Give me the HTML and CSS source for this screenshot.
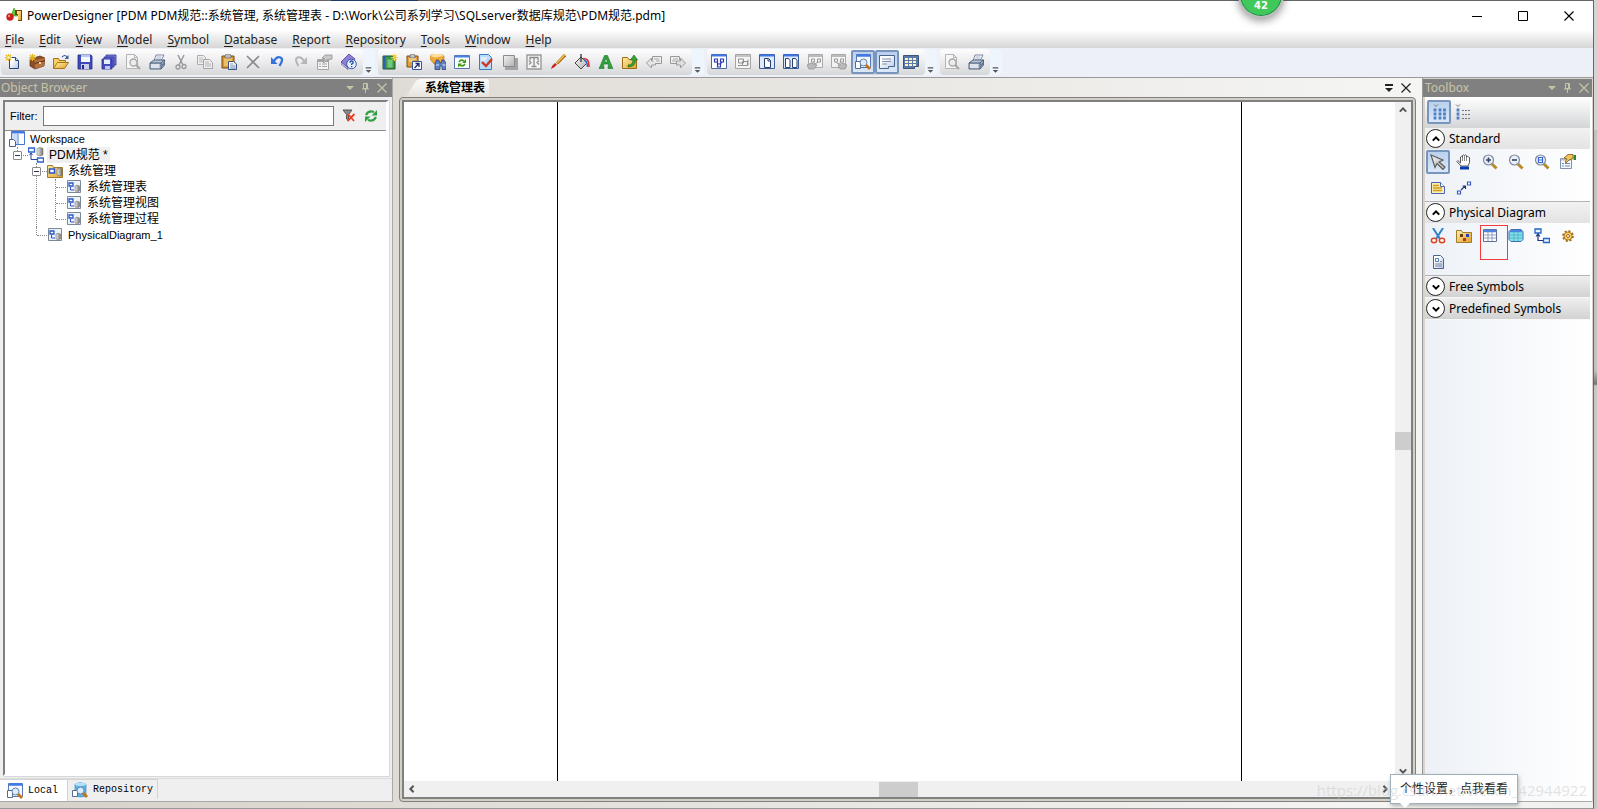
FILE: index.html
```html
<!DOCTYPE html>
<html lang="zh-CN">
<head>
<meta charset="utf-8">
<title>PowerDesigner</title>
<link rel="stylesheet" href="styles.css">
</head>
<body>
<svg class="sprite" width="0" height="0" aria-hidden="true">
  <defs>
    <linearGradient id="gold" x1="0" y1="0" x2="1" y2="1"><stop offset="0" stop-color="#fff0a8"/><stop offset="1" stop-color="#e0a02c"/></linearGradient>
    <linearGradient id="page" x1="0" y1="0" x2="1" y2="1"><stop offset="0.3" stop-color="#fff"/><stop offset="1" stop-color="#b4c6e2"/></linearGradient>
    <linearGradient id="gray" x1="0" y1="0" x2="1" y2="1"><stop offset="0" stop-color="#f4f4f4"/><stop offset="1" stop-color="#b0b0b0"/></linearGradient>
    <linearGradient id="drum" x1="0" y1="0" x2="1" y2="0"><stop offset="0" stop-color="#eee"/><stop offset="1" stop-color="#777"/></linearGradient>
  </defs>
  <symbol id="i-app" viewBox="0 0 16 16"><path d="M8 0l4 8H5z" fill="#5fc436" stroke="#3c8f22" stroke-width=".6"/><circle cx="4" cy="9" r="3.7" fill="#c9201c"/><circle cx="3" cy="8" r="1.2" fill="#f08a80"/><path d="M9 2h7v11h-4V7H9z" fill="#7c4300"/><path d="M11 3h4v9h-3V6h-1z" fill="url(#gold)"/></symbol>
  <symbol id="i-new" viewBox="0 0 16 16"><path d="M4.500 3.500h6l3 3v8h-9z" fill="url(#page)" stroke="#29477c"/><path d="M10.500 3.500v3h3" fill="#dce6f6" stroke="#29477c"/><path d="M3.500 0v7M0 3.500h7M1 1l5 5M6 1L1 6" stroke="#e5b51c" stroke-width="1.200"/><circle cx="3.500" cy="3.500" r="1.300" fill="#fff9b8"/></symbol>
  <symbol id="i-case" viewBox="0 0 16 16"><path d="M1 5l10-3 5 2-1 8-9 3-5-3z" fill="#8d4f27" stroke="#5b2e12" stroke-width=".7"/><path d="M6 6v9l9-3 1-8z" fill="#b5713e"/><path d="M6 9.500l10-3" stroke="#5b2e12"/><path d="M10 8h2v2h-2z" fill="#f0d9a0"/><path d="M3.500 0v7M0 3.500h7M1 1l5 5M6 1L1 6" stroke="#e5b51c" stroke-width="1.200"/></symbol>
  <symbol id="i-open" viewBox="0 0 16 16"><path d="M.5 14.500V4.500h5l1 2h6v3" fill="#f6cf66" stroke="#a87416"/><path d="M.5 14.500l4-6h11l-4 6z" fill="url(#gold)" stroke="#a87416"/><path d="M9 3q3-3 5 0" fill="none" stroke="#3c5c9c" stroke-width="1.200"/><path d="M15.500 1v4h-4z" fill="#3c5c9c"/></symbol>
  <symbol id="i-save" viewBox="0 0 16 16"><path d="M1 1h13l1 1v13H1z" fill="#3f48bd" stroke="#252b80" stroke-width=".8"/><path d="M4 1h9v7H4z" fill="#f3f7ff"/><path d="M4 1h9v2H4z" fill="#b6c8f5"/><path d="M4 10h8v5H4z" fill="#c8cde8"/><path d="M5 11h2v4H5z" fill="#252b80"/></symbol>
  <symbol id="i-saveall" viewBox="0 0 16 16"><path d="M5 1h10v10H5z" fill="#7d84dd" stroke="#2b3190" stroke-width=".8"/><path d="M3 3h10v10H3z" fill="#6067cf" stroke="#2b3190" stroke-width=".8"/><path d="M1 5h10v10H1z" fill="#444cc0" stroke="#2b3190" stroke-width=".8"/><path d="M3 5.500h6V10H3z" fill="#e9eeff"/><path d="M4 12h5v3H4z" fill="#c2c8ee"/></symbol>
  <symbol id="i-preview" viewBox="0 0 16 16"><path d="M1.500.5h8l3 3v11h-11z" fill="#f6f6f6" stroke="#b4b4b4"/><path d="M9.500.5v3h3" fill="none" stroke="#b4b4b4"/><circle cx="8.500" cy="8.500" r="3.500" fill="#ececec" stroke="#a6a6a6" stroke-width="1.300"/><path d="M11 11l4 4" stroke="#a6a6a6" stroke-width="2.200"/></symbol>
  <symbol id="i-print" viewBox="0 0 16 16"><path d="M5 7l2-6h8l-3 6z" fill="#fff" stroke="#5c6c88" stroke-width=".8"/><path d="M7.500 3h5M7 5h5" stroke="#8ca0c0" stroke-width=".8"/><path d="M1 9l4-3h10.500v5L12 15H1z" fill="#bcc7d8" stroke="#3f5270" stroke-width=".9"/><path d="M1 9h11l3.500-3M12 9v6" fill="none" stroke="#41536f"/><path d="M2 11h8M2 13h8" stroke="#fff"/><path d="M12.500 10.500l3-3v3l-3 3z" fill="#657998"/></symbol>
  <symbol id="i-cut" viewBox="0 0 16 16"><path d="M5 1l5 10M11 1L6 11" stroke="#999" stroke-width="1.500" fill="none"/><circle cx="5" cy="13" r="2" fill="none" stroke="#999" stroke-width="1.300"/><circle cx="11" cy="12.500" r="2" fill="none" stroke="#999" stroke-width="1.300"/></symbol>
  <symbol id="i-copy" viewBox="0 0 16 16"><path d="M.5 1.500h6l2 2v7h-8z" fill="#f0f0f0" stroke="#acacac"/><path d="M2 4h4M2 6h4M2 8h4" stroke="#bbb"/><path d="M6.500 5.500h6l3 3v6h-9z" fill="#f0f0f0" stroke="#a4a4a4"/><path d="M8 8h4M8 10h6M8 12h6" stroke="#b2b2b2"/></symbol>
  <symbol id="i-paste" viewBox="0 0 16 16"><path d="M1 2h12v12H1z" fill="#d89a32" stroke="#7b4b10"/><path d="M3 4h8v8H3z" fill="#edc067"/><path d="M4 2l1-2h4l1 2v2H4z" fill="#bdc0c8" stroke="#555" stroke-width=".6"/><path d="M7.500 7.500h5l3 2.500v5.500h-8z" fill="url(#page)" stroke="#3c527d"/><path d="M9 10h3M9 12h5M9 14h5" stroke="#7087b0" stroke-width=".8"/></symbol>
  <symbol id="i-delete" viewBox="0 0 16 16"><path d="M2 2l12 12M14 2L2 14" stroke="#8a8a8a" stroke-width="1.600"/></symbol>
  <symbol id="i-undo" viewBox="0 0 16 16"><path d="M5 7Q8 2 11.500 3.500T10.500 12" fill="none" stroke="#3474d8" stroke-width="2.300"/><path d="M2 3v7h6.500z" fill="#3474d8"/></symbol>
  <symbol id="i-redo" viewBox="0 0 16 16"><path d="M11 7Q8 2 4.500 3.500T5.500 12" fill="none" stroke="#b5b5b5" stroke-width="2"/><path d="M14 3v7H7.500z" fill="#b5b5b5"/></symbol>
  <symbol id="i-props" viewBox="0 0 16 16"><path d="M.5 5.500h11v10H.5z" fill="#f3f3f3" stroke="#a4a4a4"/><path d="M1 7h10" stroke="#a4a4a4" stroke-width="2"/><path d="M2 10h2m1 0h5M2 12.500h2m1 0h5" stroke="#a4a4a4"/><path d="M5 4l3-3 7 0v4l-5 1-3 3-1-1 2-3z" fill="#c9c9c9" stroke="#949494" stroke-width=".8"/></symbol>
  <symbol id="i-help" viewBox="0 0 16 16"><path d="M0 8L8 0l6 5-7 9z" fill="#8f7fd6" stroke="#4e3b9d" stroke-width=".8"/><path d="M0 8l7 6v1.500L0 10z" fill="#efeaff" stroke="#4e3b9d" stroke-width=".7"/><circle cx="10.500" cy="10" r="4.800" fill="#e6effc" stroke="#345aa5"/><path d="M9 8.800q0-1.800 1.600-1.800t1.500 1.400q0 .8-1.500 1.700v.9m0 1v1.200" fill="none" stroke="#2349a0" stroke-width="1.300"/></symbol>
  <symbol id="i-book" viewBox="0 0 16 16"><path d="M1 2h12v13H1z" fill="#3f9a4b" stroke="#1b5427"/><path d="M1 2h2.500v13H1z" fill="#2c5fb0"/><path d="M5.500 5.500h5v8h-5z" fill="#77c57b"/><path d="M12.500 0v7M9 3.500h7M10.500 1l4 5M14.500 1l-4 5" stroke="#f0cf3e" stroke-width="1.100"/></symbol>
  <symbol id="i-pastelink" viewBox="0 0 16 16"><path d="M1 2h11v11H1z" fill="#e0a238" stroke="#7b4b10"/><path d="M4 2l1-2h3l1 2v2H4z" fill="#c4c4c4" stroke="#555" stroke-width=".6"/><path d="M3 5h7M3 7h4" stroke="#fff2c4"/><path d="M6.500 7.500h9v8h-9z" fill="#f6f9ff" stroke="#35549b"/><path d="M8.500 14l4-4m-3-.5h3.500V13" stroke="#222a70" stroke-width="1.300" fill="none"/></symbol>
  <symbol id="i-find" viewBox="0 0 16 16"><path d="M0 2l3-2h8l3 2v7l-10 1-4-5z" fill="#eea93b" stroke="#a86f13" stroke-width=".6"/><path d="M0 2l3-2h8l3 2-9 1.500z" fill="#ffe09a"/><path d="M5 9l1.500-3h2L10 9h1l1-3h2l2 3v6.500h-4V12h-2v3.500H5z" fill="#5d83c4" stroke="#1d3768" stroke-width=".7"/><path d="M6 11h3M12.500 11h3" stroke="#dfeaff"/></symbol>
  <symbol id="i-refresh" viewBox="0 0 16 16"><path d="M.5 1.500h15v13H.5z" fill="#fff" stroke="#5877b0"/><path d="M1 2.500h14" stroke="#477fe5" stroke-width="2"/><path d="M5 8q2-3 5-1" fill="none" stroke="#3f9c1a" stroke-width="1.600"/><path d="M12 5v4H8z" fill="#3f9c1a"/><path d="M11 10q-2 3-5 1" fill="none" stroke="#3f9c1a" stroke-width="1.600"/><path d="M4 13.500V9.500h4z" fill="#3f9c1a"/></symbol>
  <symbol id="i-check" viewBox="0 0 16 16"><path d="M1.500.5h9l3 3v12h-12z" fill="#b9dcfb" stroke="#3c7ac0"/><path d="M3 4h6M3 6h5" stroke="#fff"/><path d="M4 8l4 4 6-7" fill="none" stroke="#d23527" stroke-width="2.400"/></symbol>
  <symbol id="i-shadow" viewBox="0 0 16 16"><path d="M3 4h13v12H3z" fill="#a4a4a4"/><path d="M1.500 1.500h11v11h-11z" fill="url(#gray)" stroke="#8b8b8b"/></symbol>
  <symbol id="i-fit" viewBox="0 0 16 16"><path d="M1 1h14v14H1z" fill="#f4f4f4" stroke="#999" stroke-width="1.400"/><path d="M4 6V3.500h8V6M8 3.500v9M5.500 12.500h5M3 10.500l2-2-2-2M13 10.500l-2-2 2-2" fill="none" stroke="#8c8c8c" stroke-width="1.300"/></symbol>
  <symbol id="i-brush" viewBox="0 0 16 16"><path d="M15 1L7 9.500" stroke="#a8690f" stroke-width="3"/><path d="M15 .5L7 9" stroke="#f2bf4c" stroke-width="1.500"/><path d="M7 10.500Q5.500 13 1 15q1-4 4-6z" fill="#c42920"/></symbol>
  <symbol id="i-bucket" viewBox="0 0 16 16"><path d="M1 9l6-6 6 6-6 6z" fill="url(#gray)" stroke="#444"/><path d="M7 8V0" stroke="#333" stroke-width="1.300"/><path d="M9 5q6-2 6 8" fill="none" stroke="#df2f2b" stroke-width="1.500"/><path d="M10 6q3 0 3.500 7" fill="none" stroke="#2c6ad0" stroke-width="1.500"/></symbol>
  <symbol id="i-font" viewBox="0 0 16 16"><path d="M1 14.500l1-2 4.500-11h3l4.500 11 1 2h-5v-2h1L10 10H6l-1 2.500h1v2zM6.500 8h3L8 4z" fill="#30a23c" stroke="#1c7229" stroke-width=".6"/></symbol>
  <symbol id="i-up" viewBox="0 0 16 16"><path d="M.5 14.500V3.500h5l1.500 2h7.500v9z" fill="url(#gold)" stroke="#9d6b12"/><path d="M6 11q5 0 5-5H8.500L12 1l3.500 5h-2q0 7-7.500 7z" fill="#33a532" stroke="#176018" stroke-width=".6"/></symbol>
  <symbol id="i-back" viewBox="0 0 16 16"><path d="M.5 9l5-5v3h4v4h-4v3z" fill="#e6e6e6" stroke="#999"/><path d="M6.500 6V2.500h9v7H10" fill="#eee" stroke="#999"/><path d="M8 5h5M10 7h4" stroke="#aaa"/></symbol>
  <symbol id="i-fwd" viewBox="0 0 16 16"><path d="M9.500 6V2.500h-9v7H6" fill="#eee" stroke="#999"/><path d="M3 5h5M2 7h4" stroke="#aaa"/><path d="M15.500 9l-5-5v3h-4v4h4v3z" fill="#e0e0e0" stroke="#999"/></symbol>
  <symbol id="i-diag" viewBox="0 0 16 16"><path d="M.5.5h15v14H.5z" fill="#fff" stroke="#4a6aa5"/><path d="M1 1.500h14" stroke="#3e78e8" stroke-width="2"/><path d="M3.500 5h3v3h-3zM9.500 5h3v3h-3zM6.500 10h3v3h-3zM6 8l1 2M11 8l-2 2" fill="#fff" stroke="#2e36b4" stroke-width="1.200"/></symbol>
  <symbol id="i-diag2" viewBox="0 0 16 16"><path d="M.5.5h15v14H.5z" fill="#f5f5f5" stroke="#a4a4a4"/><path d="M1 2h14" stroke="#c4c4c4" stroke-width="2"/><path d="M3.500 5h5v4h-5zM7.500 7.500h5v4h-5zM3 11.500h4m6-6v6" fill="none" stroke="#8f8f8f"/></symbol>
  <symbol id="i-page1" viewBox="0 0 16 16"><path d="M.5.5h15v14H.5z" fill="#dfeafb" stroke="#3d5d99"/><path d="M1 1.500h14" stroke="#3e78e8" stroke-width="2"/><path d="M5.500 4.500h4l2 2v7h-6z" fill="#fff" stroke="#2a3f6c"/><path d="M9 4.500V7h3" fill="none" stroke="#2a3f6c"/></symbol>
  <symbol id="i-page2" viewBox="0 0 16 16"><path d="M.5.5h15v14H.5z" fill="#dfeafb" stroke="#3d5d99"/><path d="M1 1.500h14" stroke="#3e78e8" stroke-width="2"/><path d="M2.500 4.500h3l1.500 2v7H2.500zM9.500 4.500h3l1.500 2v7H9.500z" fill="#fff" stroke="#2a3f6c"/></symbol>
  <symbol id="i-diag3" viewBox="0 0 16 16"><path d="M1.500.5h14v13h-14z" fill="#f3f3f3" stroke="#aaa"/><path d="M2 2h13" stroke="#bbb" stroke-width="2"/><path d="M4.500 5h3v3h-3zM10.500 5h3v3h-3zM6 8l2 2 3-2" fill="none" stroke="#999"/><path d="M0 11l4-2 6 2-3 4H2z" fill="#bababa" stroke="#8d8d8d" stroke-width=".7"/></symbol>
  <symbol id="i-diag4" viewBox="0 0 16 16"><path d="M.5.5h14v13H.5z" fill="#f3f3f3" stroke="#aaa"/><path d="M1 2h13" stroke="#bbb" stroke-width="2"/><path d="M3.500 5h3v3h-3zM9.500 5h3v3h-3zM5 8l2 2 3-2" fill="none" stroke="#999"/><path d="M16 11l-4-2-5 2 2 4h5z" fill="#bababa" stroke="#8d8d8d" stroke-width=".7"/></symbol>
  <symbol id="i-browser" viewBox="0 0 16 16"><path d="M1.500.5h14v13h-14z" fill="#f4f8ff" stroke="#5577b4"/><path d="M2 1.500h13" stroke="#3f79ea" stroke-width="2.500"/><path d="M.5 7.500h5v7h-5z" fill="#fff" stroke="#566a8e"/><circle cx="8.500" cy="8.500" r="3.500" fill="#dcecff" stroke="#6882ac"/><path d="M11 11l4 4" stroke="#c47519" stroke-width="2.800"/></symbol>
  <symbol id="i-repo" viewBox="0 0 16 16"><path d="M3 2q5-3 11 0v12q-5 2-11 0z" fill="#5ab6ea" stroke="#2c82b8" stroke-width=".6"/><ellipse cx="8.500" cy="2.300" rx="5.500" ry="1.700" fill="#b8e2fa"/><path d="M.5 8.500h5v6h-5z" fill="#fff" stroke="#566a8e"/><circle cx="8.500" cy="8.500" r="3.500" fill="#dcecff" stroke="#6882ac"/><path d="M11 11l4 4" stroke="#c47519" stroke-width="2.800"/></symbol>
  <symbol id="i-output" viewBox="0 0 16 16"><path d="M.5 1.500h15v11h-6v2h-9z" fill="url(#page)" stroke="#4c6590"/><path d="M3 5h9M3 7.500h9M3 10h5" stroke="#7d8daa"/></symbol>
  <symbol id="i-grid" viewBox="0 0 16 16"><path d="M.5 1.500h15v11h-4v2h-11z" fill="#5878ae" stroke="#3d5378"/><path d="M2 4h3v2H2zM6 4h3v2H6zM10 4h3v2h-3zM2 7h3v2H2zM6 7h3v2H6zM10 7h3v2h-3zM2 10h3v2H2zM6 10h3v2H6zM10 10h3v2h-3z" fill="#fff3b6"/></symbol>
  <symbol id="i-nofilter" viewBox="0 0 16 16"><path d="M2 2h9L7.500 6.500v6L5.500 11V6.500z" fill="#888" stroke="#555"/><path d="M7 6l6 7M13.500 6l-7 7" stroke="#ea3c20" stroke-width="1.800"/></symbol>
  <symbol id="i-sync" viewBox="0 0 16 16"><path d="M3 7Q5.500 2 11 4M13 9Q10.500 14 5 12" fill="none" stroke="#31a043" stroke-width="2.200"/><path d="M14 2v5.500H8.500zM2 14V8.500h5.500z" fill="#31a043"/></symbol>
  <symbol id="i-ws" viewBox="0 0 16 16"><path d="M2.500.5h13v13h-13z" fill="#fff" stroke="#4878d0"/><path d="M3 1.500h12" stroke="#3f79ea" stroke-width="2"/><path d="M9 3v10" stroke="#4878d0"/><path d="M3 3h5v10H3z" fill="#c9dcf8"/><path d="M.5 8.500h4l2 2v5h-6z" fill="#fff" stroke="#4c5f80"/></symbol>
  <symbol id="i-pdm" viewBox="0 0 16 16"><path d="M.5 1h6v4h-6zM9.500 11h6v4h-6z" fill="#fff" stroke="#2d63cf" stroke-width="1.300"/><path d="M3 6v6.500h6M1.500 8L3 6l1.500 2" fill="none" stroke="#27439b"/><path d="M9 1.500q3-2 6 0V8q-3 2-6 0z" fill="url(#drum)" stroke="#777" stroke-width=".6"/></symbol>
  <symbol id="i-pkg" viewBox="0 0 16 16"><path d="M.5 14.500V2.500h5l1 2h9v10z" fill="url(#gold)" stroke="#a07b2d"/><path d="M2.500 6h5v4h-5z" fill="#fff" stroke="#2b55c8" stroke-width="1.500"/><path d="M10 6q3-2 5 0v6q-3 2-5 0z" fill="url(#drum)" stroke="#666" stroke-width=".6"/></symbol>
  <symbol id="i-dg" viewBox="0 0 16 16"><path d="M1.500 1.500h13v12h-13z" fill="#edf3fb" stroke="#7b8898"/><path d="M3 4h4v3H3z" fill="#fff" stroke="#2b55c8" stroke-width="1.300"/><path d="M4.500 8v3H8" fill="none" stroke="#2b55c8"/><path d="M9 7q2-1.500 4.500 0v5Q11 13 9 12z" fill="url(#drum)" stroke="#777" stroke-width=".6"/></symbol>
  <symbol id="i-icons" viewBox="0 0 16 16"><path d="M3 .5l2 2 2-2" fill="none" stroke="#777"/><path d="M3.500 5.500h1v1h-1zM8.500 5.500h1v1h-1zM13 5.500h1v1h-1zM3.500 9.500h1v1h-1zM8.500 9.500h1v1h-1zM13 9.500h1v1h-1zM3.500 13.500h1v1h-1zM8.500 13.500h1v1h-1zM13 13.500h1v1h-1z" fill="#f0a0c0" stroke="#4d7fc6" stroke-width="1.800"/></symbol>
  <symbol id="i-list" viewBox="0 0 16 16"><path d="M1 .5l2 2 2-2" fill="none" stroke="#777"/><path d="M2.500 5.500h1v1h-1zM2.500 9.500h1v1h-1zM2.500 13.500h1v1h-1z" fill="#fff" stroke="#4d7fc6" stroke-width="1.800"/><path d="M7 6.500h9M7 10.500h9M7 14.500h9" stroke="#777" stroke-dasharray="2 1"/></symbol>
  <symbol id="i-arrow" viewBox="0 0 16 16"><path d="M1 1l12 5-4 2 6 5-2 2.500-6-6-2 4z" fill="url(#gray)" stroke="#555" stroke-width="1.100"/></symbol>
  <symbol id="i-hand" viewBox="0 0 16 16"><path d="M5 12L.8 7.500l1-1L4.500 9V3q1-1.200 2 0V1.500q1-1.200 2 0 1-1.200 2 0V3q1.200-1.200 2 0l1 .5v5L12 12z" fill="#fff" stroke="#444" stroke-width=".9"/><path d="M6.500 3v4M8.500 2v5M10.500 3v4" stroke="#555" stroke-width=".7"/><path d="M4 12.500h9v3H4z" fill="#0b3ab0"/></symbol>
  <symbol id="i-zin" viewBox="0 0 16 16"><path d="M10 10l4.500 4.500" stroke="#b98a28" stroke-width="3"/><circle cx="6.500" cy="6" r="5" fill="#e7f0fb" stroke="#81899a" stroke-width="1.200"/><path d="M4 6h5M6.500 3.500v5" stroke="#36435d" stroke-width="1.600"/></symbol>
  <symbol id="i-zout" viewBox="0 0 16 16"><path d="M10 10l4.500 4.500" stroke="#b98a28" stroke-width="3"/><circle cx="6.500" cy="6" r="5" fill="#e7f0fb" stroke="#81899a" stroke-width="1.200"/><path d="M4 6h5" stroke="#36435d" stroke-width="1.600"/></symbol>
  <symbol id="i-zfit" viewBox="0 0 16 16"><path d="M10 10l4.500 4.500" stroke="#b98a28" stroke-width="3"/><circle cx="6.500" cy="6" r="5" fill="#e7f0fb" stroke="#81899a" stroke-width="1.200"/><path d="M4.500 3.500h4v5h-4zM4.500 6h4" fill="#fff" stroke="#3567d8" stroke-width="1.200"/></symbol>
  <symbol id="i-tprops" viewBox="0 0 16 16"><path d="M.5 4.500h11v10H.5z" fill="#f3f7ff" stroke="#8290a8"/><path d="M1 5.500h10" stroke="#b4b9c4" stroke-width="2"/><path d="M2 9.500h2m1 0h5M2 12h2m1 0h5" stroke="#7386ac"/><path d="M4 4l4-3.500h5v4L9 6 6 9 5 8l2-3z" fill="#f0c456" stroke="#7a591b" stroke-width=".8"/><path d="M13.500 1H16v5h-2.500z" fill="#36822f"/></symbol>
  <symbol id="i-note" viewBox="0 0 16 16"><path d="M1.500 2.500h9l4 4v7h-13z" fill="#fdedaa" stroke="#4966b4"/><path d="M10.500 2.500v4h4" fill="#fff" stroke="#4966b4"/><path d="M3 5.500h6M3 8h9M3 10.500h9" stroke="#d09a1d" stroke-width="1.300"/></symbol>
  <symbol id="i-link" viewBox="0 0 16 16"><path d="M1.500 11h3v3h-3zM11.500 2h3v3h-3z" fill="#fff" stroke="#3a5dbd" stroke-width="1.200"/><path d="M5 10l4-4M6.500 6h3v3" fill="none" stroke="#263a70" stroke-width="1.200"/></symbol>
  <symbol id="i-scissors" viewBox="0 0 16 16"><path d="M3 0l7 11M13 0L6 11" stroke="#2f82cc" stroke-width="2"/><ellipse cx="4" cy="12.500" rx="2.600" ry="2.200" fill="#fff" stroke="#e0431f" stroke-width="1.500"/><ellipse cx="12" cy="12.500" rx="2.600" ry="2.200" fill="#fff" stroke="#e0431f" stroke-width="1.500"/></symbol>
  <symbol id="i-package" viewBox="0 0 16 16"><path d="M.5 14.500V2.500h5l1 2h9v10z" fill="url(#gold)" stroke="#a07b2d"/><path d="M4 6h3v3H4z" fill="#6a3b17"/><path d="M10 6h3v3h-3z" fill="#243fae"/><path d="M7 10h3v3H7z" fill="#c3301d"/></symbol>
  <symbol id="i-table" viewBox="0 0 16 16"><path d="M1.500 1.500h13v12h-13z" fill="#fff" stroke="#5f7095"/><path d="M2 3h12" stroke="#4c83df" stroke-width="2.500"/><path d="M2 7h12M2 10h12M6 4v9M10 4v9" stroke="#8fa0bd"/></symbol>
  <symbol id="i-view" viewBox="0 0 16 16"><path d="M3 1.500h10l2 2v8l-2 2H3l-2-2v-8z" fill="#80e4ea" stroke="#3d6fb5"/><path d="M2 3h12" stroke="#4c83df" stroke-width="2.500"/><path d="M2 7h12M2 10h12M6 4v9M10 4v9" stroke="#5bb0c8"/></symbol>
  <symbol id="i-ref" viewBox="0 0 16 16"><path d="M1 1h6v4H1zM9.500 10.500h6v4h-6z" fill="#eaf3ff" stroke="#2465cc" stroke-width="1.300"/><path d="M4 6v6.500h5M2 8.500L4 6l2 2.500" fill="none" stroke="#1c3578" stroke-width="1.200"/></symbol>
  <symbol id="i-proc" viewBox="0 0 16 16"><circle cx="8" cy="8" r="4.500" fill="none" stroke="#9e6a16" stroke-width="2.600" stroke-dasharray="2 1.500"/><circle cx="8" cy="8" r="4" fill="#f8cd6c" stroke="#b57d20"/><circle cx="8" cy="8" r="1.500" fill="#fff" stroke="#9e6a16"/></symbol>
  <symbol id="i-file" viewBox="0 0 16 16"><path d="M3.500 1.500h7l3 3v10h-10z" fill="url(#page)" stroke="#4d6389"/><path d="M5.500 4.500h3v3h-3z" fill="#fff" stroke="#557ab8"/><path d="M5 10h7M5 12h7M10 7.500h2" stroke="#7686a4"/></symbol>
  <symbol id="c-up" viewBox="0 0 10 10"><path d="M1 7l4-4 4 4" fill="none" stroke="currentColor" stroke-width="2.500"/></symbol>
  <symbol id="c-down" viewBox="0 0 10 10"><path d="M1 3l4 4 4-4" fill="none" stroke="currentColor" stroke-width="2.500"/></symbol>
  <symbol id="c-left" viewBox="0 0 10 10"><path d="M7 1L3 5l4 4" fill="none" stroke="currentColor" stroke-width="2.500"/></symbol>
  <symbol id="c-right" viewBox="0 0 10 10"><path d="M3 1l4 4-4 4" fill="none" stroke="currentColor" stroke-width="2.500"/></symbol>
  <symbol id="c-tri" viewBox="0 0 10 10"><path d="M1 3h8L5 7z" fill="currentColor"/></symbol>
  <symbol id="c-pin" viewBox="0 0 10 10"><path d="M2.500.5h4v5h-4zM1 6h7M4.500 6v4M5.500 1v5" fill="none" stroke="currentColor"/></symbol>
  <symbol id="c-x" viewBox="0 0 10 10"><path d="M.5.5l9 9M9.500.5l-9 9" fill="none" stroke="currentColor" stroke-width="1.200"/></symbol>
  <symbol id="c-more" viewBox="0 0 10 10"><path d="M1 1h8v2H1zM1 5h8L5 9z" fill="currentColor"/></symbol>
  <symbol id="c-min" viewBox="0 0 10 10"><path d="M0 5.500h10" stroke="currentColor"/></symbol>
  <symbol id="c-max" viewBox="0 0 10 10"><path d="M.5.5h9v9h-9z" fill="none" stroke="currentColor"/></symbol>
</svg>

<div class="desktop">
<div class="window">
  <header class="titlebar">
    <svg class="icon"><use href="#i-app"/></svg>
    <h1 class="title">PowerDesigner [PDM PDM规范::系统管理, 系统管理表 - D:\Work\公司系列学习\SQLserver数据库规范\PDM规范.pdm]</h1>
    <div class="win-buttons">
      <button class="win-btn" aria-label="Minimize"><svg class="glyph"><use href="#c-min"/></svg></button>
      <button class="win-btn" aria-label="Maximize"><svg class="glyph"><use href="#c-max"/></svg></button>
      <button class="win-btn" aria-label="Close"><svg class="glyph"><use href="#c-x"/></svg></button>
    </div>
    <div class="ball">42</div>
  </header>

  <nav class="menubar">
    <button class="menu"><u>F</u>ile</button>
    <button class="menu"><u>E</u>dit</button>
    <button class="menu"><u>V</u>iew</button>
    <button class="menu"><u>M</u>odel</button>
    <button class="menu"><u>S</u>ymbol</button>
    <button class="menu"><u>D</u>atabase</button>
    <button class="menu"><u>R</u>eport</button>
    <button class="menu"><u>R</u>epository</button>
    <button class="menu"><u>T</u>ools</button>
    <button class="menu"><u>W</u>indow</button>
    <button class="menu"><u>H</u>elp</button>
  </nav>

  <div class="toolbars">
    <div class="toolbar">
      <div class="tools">
        <button class="tool" aria-label="New"><svg class="icon"><use href="#i-new"/></svg></button>
        <button class="tool" aria-label="New project"><svg class="icon"><use href="#i-case"/></svg></button>
        <button class="tool" aria-label="Open"><svg class="icon"><use href="#i-open"/></svg></button>
        <button class="tool" aria-label="Save"><svg class="icon"><use href="#i-save"/></svg></button>
        <button class="tool" aria-label="Save all"><svg class="icon"><use href="#i-saveall"/></svg></button>
        <button class="tool" aria-label="Print preview"><svg class="icon"><use href="#i-preview"/></svg></button>
        <button class="tool" aria-label="Print"><svg class="icon"><use href="#i-print"/></svg></button>
        <button class="tool" aria-label="Cut"><svg class="icon"><use href="#i-cut"/></svg></button>
        <button class="tool" aria-label="Copy"><svg class="icon"><use href="#i-copy"/></svg></button>
        <button class="tool" aria-label="Paste"><svg class="icon"><use href="#i-paste"/></svg></button>
        <button class="tool" aria-label="Delete"><svg class="icon"><use href="#i-delete"/></svg></button>
        <button class="tool" aria-label="Undo"><svg class="icon"><use href="#i-undo"/></svg></button>
        <button class="tool" aria-label="Redo"><svg class="icon"><use href="#i-redo"/></svg></button>
        <button class="tool" aria-label="Properties"><svg class="icon"><use href="#i-props"/></svg></button>
        <button class="tool" aria-label="Help"><svg class="icon"><use href="#i-help"/></svg></button>
      </div>
      <button class="overflow" aria-label="More"><svg class="glyph"><use href="#c-more"/></svg></button>
    </div>
    <div class="toolbar">
      <div class="tools">
        <button class="tool" aria-label="New model"><svg class="icon"><use href="#i-book"/></svg></button>
        <button class="tool" aria-label="Paste as shortcut"><svg class="icon"><use href="#i-pastelink"/></svg></button>
        <button class="tool" aria-label="Find objects"><svg class="icon"><use href="#i-find"/></svg></button>
        <button class="tool" aria-label="Refresh"><svg class="icon"><use href="#i-refresh"/></svg></button>
        <button class="tool" aria-label="Check model"><svg class="icon"><use href="#i-check"/></svg></button>
        <button class="tool" aria-label="Shadow"><svg class="icon"><use href="#i-shadow"/></svg></button>
        <button class="tool" aria-label="Adjust to text"><svg class="icon"><use href="#i-fit"/></svg></button>
        <button class="tool" aria-label="Line style"><svg class="icon"><use href="#i-brush"/></svg></button>
        <button class="tool" aria-label="Fill"><svg class="icon"><use href="#i-bucket"/></svg></button>
        <button class="tool" aria-label="Font"><svg class="icon"><use href="#i-font"/></svg></button>
        <button class="tool" aria-label="Up one level"><svg class="icon"><use href="#i-up"/></svg></button>
        <button class="tool" aria-label="Previous"><svg class="icon"><use href="#i-back"/></svg></button>
        <button class="tool" aria-label="Next"><svg class="icon"><use href="#i-fwd"/></svg></button>
      </div>
      <button class="overflow" aria-label="More"><svg class="glyph"><use href="#c-more"/></svg></button>
    </div>
    <div class="toolbar">
      <div class="tools">
        <button class="tool" aria-label="Whole diagram"><svg class="icon"><use href="#i-diag"/></svg></button>
        <button class="tool" aria-label="Selection"><svg class="icon"><use href="#i-diag2"/></svg></button>
        <button class="tool" aria-label="Page view"><svg class="icon"><use href="#i-page1"/></svg></button>
        <button class="tool" aria-label="Used pages"><svg class="icon"><use href="#i-page2"/></svg></button>
        <button class="tool" aria-label="Previous view"><svg class="icon"><use href="#i-diag3"/></svg></button>
        <button class="tool" aria-label="Next view"><svg class="icon"><use href="#i-diag4"/></svg></button>
        <button class="tool on" aria-label="Browser" aria-pressed="true"><svg class="icon"><use href="#i-browser"/></svg></button>
        <button class="tool on" aria-label="Output" aria-pressed="true"><svg class="icon"><use href="#i-output"/></svg></button>
        <button class="tool" aria-label="Result list"><svg class="icon"><use href="#i-grid"/></svg></button>
      </div>
      <button class="overflow" aria-label="More"><svg class="glyph"><use href="#c-more"/></svg></button>
    </div>
    <div class="toolbar">
      <div class="tools">
        <button class="tool" aria-label="Report preview"><svg class="icon"><use href="#i-preview"/></svg></button>
        <button class="tool" aria-label="Print report"><svg class="icon"><use href="#i-print"/></svg></button>
      </div>
      <button class="overflow" aria-label="More"><svg class="glyph"><use href="#c-more"/></svg></button>
    </div>
  </div>

  <main class="workspace">
    <section class="browser">
      <div class="pane-head">
        <h2 class="pane-title">Object Browser</h2>
        <button class="pane-btn" aria-label="Menu"><svg class="glyph"><use href="#c-tri"/></svg></button>
        <button class="pane-btn" aria-label="Pin"><svg class="glyph"><use href="#c-pin"/></svg></button>
        <button class="pane-btn" aria-label="Close"><svg class="glyph"><use href="#c-x"/></svg></button>
      </div>
      <div class="browser-body">
        <div class="filter">
          <label class="latin" for="filter">Filter:</label>
          <input id="filter" type="text">
          <button class="filter-btn" aria-label="Clear filter"><svg class="icon"><use href="#i-nofilter"/></svg></button>
          <button class="filter-btn" aria-label="Refresh"><svg class="icon"><use href="#i-sync"/></svg></button>
        </div>
        <div class="tree">
          <div class="row"><svg class="icon"><use href="#i-ws"/></svg><span class="name latin">Workspace</span></div>
          <ul class="level">
            <li><div class="row"><button class="stub toggle" aria-label="Collapse"></button><svg class="icon"><use href="#i-pdm"/></svg><span class="name current">PDM规范 *</span></div>
              <ul class="level">
                <li><div class="row"><button class="stub toggle" aria-label="Collapse"></button><svg class="icon"><use href="#i-pkg"/></svg><span class="name">系统管理</span></div>
                  <ul class="level">
                    <li><div class="row"><span class="stub"></span><svg class="icon"><use href="#i-dg"/></svg><span class="name">系统管理表</span></div></li>
                    <li><div class="row"><span class="stub"></span><svg class="icon"><use href="#i-dg"/></svg><span class="name">系统管理视图</span></div></li>
                    <li><div class="row"><span class="stub"></span><svg class="icon"><use href="#i-dg"/></svg><span class="name">系统管理过程</span></div></li>
                  </ul>
                </li>
                <li><div class="row"><span class="stub"></span><svg class="icon"><use href="#i-dg"/></svg><span class="name latin">PhysicalDiagram_1</span></div></li>
              </ul>
            </li>
          </ul>
        </div>
      </div>
      <div class="bottom-tabs">
        <button class="bottom-tab selected"><svg class="icon"><use href="#i-browser"/></svg>Local</button>
        <button class="bottom-tab"><svg class="icon"><use href="#i-repo"/></svg>Repository</button>
      </div>
    </section>

    <section class="document">
      <div class="doc-tabs">
        <button class="doc-tab">系统管理表</button>
        <div class="doc-actions">
          <button class="doc-btn" aria-label="Windows"><svg class="glyph"><use href="#c-more"/></svg></button>
          <button class="doc-btn" aria-label="Close"><svg class="glyph"><use href="#c-x"/></svg></button>
        </div>
      </div>
      <div class="doc-frame">
        <div class="doc-view">
          <div class="canvas"><div class="sheet"></div></div>
          <div class="scroll vertical">
            <button class="scroll-btn" aria-label="Up"><svg class="glyph"><use href="#c-up"/></svg></button>
            <div class="track"><div class="thumb"></div></div>
            <button class="scroll-btn" aria-label="Down"><svg class="glyph"><use href="#c-down"/></svg></button>
          </div>
          <div class="scroll horizontal">
            <button class="scroll-btn" aria-label="Left"><svg class="glyph"><use href="#c-left"/></svg></button>
            <div class="track"><div class="thumb"></div></div>
            <button class="scroll-btn" aria-label="Right"><svg class="glyph"><use href="#c-right"/></svg></button>
          </div>
          <div class="corner"></div>
        </div>
      </div>
    </section>

    <aside class="toolbox">
      <div class="pane-head">
        <h2 class="pane-title">Toolbox</h2>
        <button class="pane-btn" aria-label="Menu"><svg class="glyph"><use href="#c-tri"/></svg></button>
        <button class="pane-btn" aria-label="Pin"><svg class="glyph"><use href="#c-pin"/></svg></button>
        <button class="pane-btn" aria-label="Close"><svg class="glyph"><use href="#c-x"/></svg></button>
      </div>
      <div class="toolbox-body">
        <div class="view-modes">
          <button class="tool on" aria-label="Icon view" aria-pressed="true"><svg class="icon"><use href="#i-icons"/></svg></button>
          <button class="tool" aria-label="List view"><svg class="icon"><use href="#i-list"/></svg></button>
        </div>
        <button class="group-head"><span class="disc"><svg class="glyph"><use href="#c-up"/></svg></span>Standard</button>
        <div class="palette">
          <button class="tool on" aria-label="Pointer"><svg class="icon"><use href="#i-arrow"/></svg></button>
          <button class="tool" aria-label="Grabber"><svg class="icon"><use href="#i-hand"/></svg></button>
          <button class="tool" aria-label="Zoom in"><svg class="icon"><use href="#i-zin"/></svg></button>
          <button class="tool" aria-label="Zoom out"><svg class="icon"><use href="#i-zout"/></svg></button>
          <button class="tool" aria-label="Open diagram"><svg class="icon"><use href="#i-zfit"/></svg></button>
          <button class="tool" aria-label="Properties"><svg class="icon"><use href="#i-tprops"/></svg></button>
          <button class="tool" aria-label="Note"><svg class="icon"><use href="#i-note"/></svg></button>
          <button class="tool" aria-label="Link"><svg class="icon"><use href="#i-link"/></svg></button>
        </div>
        <button class="group-head"><span class="disc"><svg class="glyph"><use href="#c-up"/></svg></span>Physical Diagram</button>
        <div class="palette">
          <button class="tool" aria-label="Delete"><svg class="icon"><use href="#i-scissors"/></svg></button>
          <button class="tool" aria-label="Package"><svg class="icon"><use href="#i-package"/></svg></button>
          <button class="tool marked" aria-label="Table"><svg class="icon"><use href="#i-table"/></svg></button>
          <button class="tool" aria-label="View"><svg class="icon"><use href="#i-view"/></svg></button>
          <button class="tool" aria-label="Reference"><svg class="icon"><use href="#i-ref"/></svg></button>
          <button class="tool" aria-label="Procedure"><svg class="icon"><use href="#i-proc"/></svg></button>
          <button class="tool" aria-label="File"><svg class="icon"><use href="#i-file"/></svg></button>
        </div>
        <button class="group-head closed"><span class="disc"><svg class="glyph"><use href="#c-down"/></svg></span>Free Symbols</button>
        <button class="group-head closed"><span class="disc"><svg class="glyph"><use href="#c-down"/></svg></span>Predefined Symbols</button>
      </div>
    </aside>
  </main>
  <div class="tip">个性设置，点我看看</div>
  <div class="watermark">https://blog.csdn.net/weixin_42944922</div>
</div>
</div>
</body>
</html>
```
FILE: styles.css
```css
*, *::before, *::after { box-sizing: border-box; }

:root {
  --ui: "Noto Sans", "Noto Sans CJK SC", sans-serif;
  --tree: "Liberation Sans", "Noto Sans CJK SC", sans-serif;
  --gray: #808080;
  --pane-ink: #c8c4a8;
}

body {
  margin: 0;
  font: 12px/16px var(--ui);
  color: #000;
}

button {
  margin: 0;
  padding: 0;
  border: 0;
  background: none;
  font: inherit;
  color: inherit;
}

h1, h2, ul { margin: 0; padding: 0; font: inherit; list-style: none; }

.sprite { position: absolute; }
.icon { display: block; flex: none; width: 16px; height: 16px; }
.glyph { display: block; flex: none; width: 10px; height: 10px; }

.desktop {
  display: flex;
  height: 100vh;
  padding-right: 3px;
  background: linear-gradient(#d4d4d4 0 130px, #c2c2c2 130px 370px, #777 384px, #c8c8c8 386px);
}

.window {
  position: relative;
  display: flex;
  flex: 1;
  flex-direction: column;
  min-width: 0;
  padding-top: 1px;
  border-right: 1px solid #666;
  border-bottom: 1px solid #999;
  background: linear-gradient(90deg, #666 331px, #1f3a63 331px 418px, #666 418px) top / 100% 1px no-repeat #fff;
}

/* Title bar */
.titlebar {
  position: relative;
  display: flex;
  align-items: center;
  height: 30px;
  padding: 0 1px 0 6px;
}
.title { flex: 1; padding-left: 5px; white-space: nowrap; }
.win-buttons { display: flex; }
.win-btn {
  display: flex;
  align-items: center;
  justify-content: center;
  width: 46px;
  height: 28px;
}
.ball {
  position: absolute;
  top: -29px;
  right: 309px;
  width: 46px;
  height: 46px;
  padding-top: 25px;
  border: 2px solid #bdbdbd;
  border-radius: 50%;
  background: #41c85a;
  box-shadow: inset 0 0 0 1px #17884a, 0 3px 8px #0006;
  color: #fff;
  font: bold 10px/14px "DejaVu Sans", sans-serif;
  text-align: center;
  clip-path: inset(28px -12px -14px -12px);
}

/* Menu */
.menubar {
  display: flex;
  height: 17px;
  background: linear-gradient(#fcfcfd, #d6d6d7);
}
.menu { padding: 0 8px 0 7px; color: #222; line-height: 17px; }
.menu:first-child { padding-left: 5px; }
.menu u { text-underline-offset: 2px; }

/* Toolbars */
.toolbars {
  display: flex;
  gap: 3px;
  height: 30px;
  padding: 1px 0 2px 1px;
  border-bottom: 1px solid #9a9a9a;
  background: #edf0f6;
}
.toolbar { display: flex; border-radius: 4px; background: #eef5fd; }
.tools {
  display: flex;
  padding: 1px 2px 2px 0;
  border-radius: 4px;
  background: linear-gradient(#fdfdfe, #ececee 50%, #d6d7d9);
}
.tool {
  display: flex;
  align-items: center;
  justify-content: center;
  width: 24px;
  height: 24px;
  border: 1px solid transparent;
  border-radius: 2px;
}
.tool.on {
  border: 2px solid #7795bd;
  background: linear-gradient(#b9d0ee, #dbe8f8);
}
.overflow { width: 12px; padding: 15px 3px 0 2px; color: #555; }
.overflow .glyph { width: 7px; height: 8px; }

/* Work area */
.workspace {
  display: flex;
  flex: 1;
  min-height: 0;
  padding-bottom: 6px;
  background: linear-gradient(90deg, #d6d1c8, #f5f5f4 88%, #f0f0ee);
}

.pane-head {
  display: flex;
  align-items: center;
  height: 18px;
  background: var(--gray);
  color: var(--pane-ink);
}
.pane-title { flex: 1; padding-left: 1px; }
.pane-btn { display: flex; justify-content: center; width: 16px; }

.browser {
  display: flex;
  flex: none;
  flex-direction: column;
  width: 393px;
  padding-top: 1px;
  border-right: 1px solid #a8a8a8;
  border-bottom: 1px solid #a8a8a8;
  background: #efefef;
}
.browser .pane-head { margin-bottom: 3px; padding-right: 2px; }
.browser-body {
  display: flex;
  flex: 1;
  flex-direction: column;
  margin: 0 3px 2px;
  border: 2px solid var(--gray);
  border-right: 3px solid #fff;
  border-bottom: 2px solid #fff;
  background: #fff;
  box-shadow: 1px 1px #d8d8d8;
  font-family: var(--tree);
}
.latin { font-size: 11px; }
.filter {
  display: flex;
  align-items: center;
  height: 29px;
  padding: 0 4px 0 5px;
  border-bottom: 1px solid #8c8c8c;
  background: #efefef;
}
.filter input {
  flex: 1;
  min-width: 0;
  height: 20px;
  margin: 0 4px 0 5px;
  padding: 0 4px;
  border: 1px solid #777;
  background: #fff;
  font: inherit;
}
.filter-btn { width: 22px; padding: 0 3px; }

.tree { flex: 1; padding-left: 4px; }
.row { display: flex; align-items: center; height: 16px; }
.name { margin-left: 3px; padding: 0 2px; white-space: nowrap; }
.name.current { background: #efefef; }
.level .level { padding-left: 19px; }
.level li { position: relative; }
.level li::before {
  content: "";
  position: absolute;
  top: 0;
  bottom: 0;
  left: 8px;
  border-left: 1px dotted #888;
}
.level li:last-child::before { bottom: auto; height: 8px; }
.stub {
  position: relative;
  width: 19px;
  height: 16px;
  flex: none;
}
.stub::before {
  content: "";
  position: absolute;
  top: 8px;
  left: 9px;
  right: 0;
  border-top: 1px dotted #888;
}
.toggle::after {
  content: "";
  position: absolute;
  top: 4px;
  left: 4px;
  width: 9px;
  height: 9px;
  border: 1px solid #8a8a8a;
  border-radius: 1px;
  background: linear-gradient(#335 0 0) center / 5px 1px no-repeat #fff;
}

.bottom-tabs { display: flex; height: 23px; border-top: 1px solid #dcdcdc; }
.bottom-tab {
  display: flex;
  align-items: center;
  gap: 5px;
  height: 20px;
  padding: 0 4px;
  border: solid #d4d4d4;
  border-width: 1px 1px 0 0;
  font: 10px/16px "Liberation Mono", monospace;
}
.bottom-tab.selected { height: 22px; padding: 0 9px 0 7px; background: #fff; }

/* Document */
.document {
  display: flex;
  flex: 1;
  flex-direction: column;
  min-width: 0;
  margin: 0 6px;
}
.doc-tabs { display: flex; height: 19px; }
.doc-tab {
  height: 18px;
  margin: 1px 0 0 5px;
  padding: 0 4px 0 21px;
  border-radius: 0 3px 0 0;
  background: linear-gradient(#fbfbfa, #e6e3dd);
  font-weight: bold;
  clip-path: polygon(0 100%, 3px 90%, 12px 10%, 16px 0, 100% 0, 100% 100%);
}
.doc-actions { display: flex; align-items: center; gap: 7px; margin-left: auto; padding-right: 5px; }
.doc-btn .glyph { color: #222; }
.doc-frame {
  display: flex;
  flex: 1;
  min-height: 0;
  padding: 2px;
  border: 1px solid var(--gray);
  border-radius: 4px;
  background: #d4d0c8;
}
.doc-view {
  display: grid;
  flex: 1;
  grid-template: 1fr 16px / 1fr 16px;
  border: 2px solid var(--gray);
}
.canvas { display: flex; background: #fff; }
.sheet { flex: 1; margin: 0 153px; border: solid #000; border-width: 0 1px; }
.scroll { display: flex; background: #f0f0f0; color: #555; }
.scroll-btn { display: flex; align-items: center; justify-content: center; width: 16px; height: 16px; }
.scroll .glyph { width: 8px; height: 8px; }
.track { display: flex; flex: 1; align-items: center; justify-content: center; }
.thumb { background: #cdcdcd; }
.vertical { flex-direction: column; padding-bottom: 2px; }
.vertical .thumb { width: 16px; height: 18px; }
.horizontal { padding-right: 2px; }
.horizontal .thumb { width: 39px; height: 15px; }
.corner { background: #f0f0f0; }

/* Toolbox */
.toolbox {
  display: flex;
  flex: none;
  flex-direction: column;
  width: 171px;
  padding: 1px 1px 0 0;
  border-left: 1px solid #999;
  background: #d8d4cc;
}
.toolbox .pane-title { padding-left: 2px; }
.toolbox-body {
  flex: 1;
  margin-left: 2px;
  padding-right: 2px;
  border-bottom: 1px solid #aaa;
  background: linear-gradient(90deg, #edf1f7, #fff);
}
.view-modes {
  display: flex;
  height: 31px;
  padding: 3px 2px;
  background: linear-gradient(#fff, #d3d5d7);
}
.group-head {
  display: flex;
  align-items: center;
  gap: 4px;
  width: 100%;
  height: 21px;
  background: linear-gradient(#f2f2f2, #e3e3e3);
}
.group-head.closed { height: 22px; border-bottom: 1px solid #f8f8f8; background: linear-gradient(#efefef, #d2d2d2); }
.disc {
  display: flex;
  align-items: center;
  justify-content: center;
  width: 19px;
  height: 19px;
  margin-left: 1px;
  border: 1px solid #222;
  border-radius: 50%;
  background: #fff;
}
.disc .glyph { width: 8px; height: 8px; }
.palette { display: flex; flex-wrap: wrap; gap: 2px; padding: 1px; border-bottom: 1px solid #b4b4b4; }
.marked { position: relative; }
.marked::after {
  content: "";
  position: absolute;
  top: 0;
  left: 1px;
  width: 28px;
  height: 35px;
  border: 1px solid #f03c3c;
}

/* Overlays */
.tip {
  position: absolute;
  right: 75px;
  bottom: 4px;
  padding: 6px 9px;
  border: 1px solid #9eb0bc;
  background: #fff;
  box-shadow: 1px 2px 4px #0004;
  color: #222;
}
.tip::after {
  content: "";
  position: absolute;
  bottom: -5px;
  left: 9px;
  border: solid transparent;
  border-width: 5px 5px 0;
  border-top-color: #fff;
}
.watermark {
  position: absolute;
  right: 6px;
  bottom: 8px;
  color: #c8c8c880;
  font: 15px/20px "Open Sans", sans-serif;
  white-space: nowrap;
}
```
